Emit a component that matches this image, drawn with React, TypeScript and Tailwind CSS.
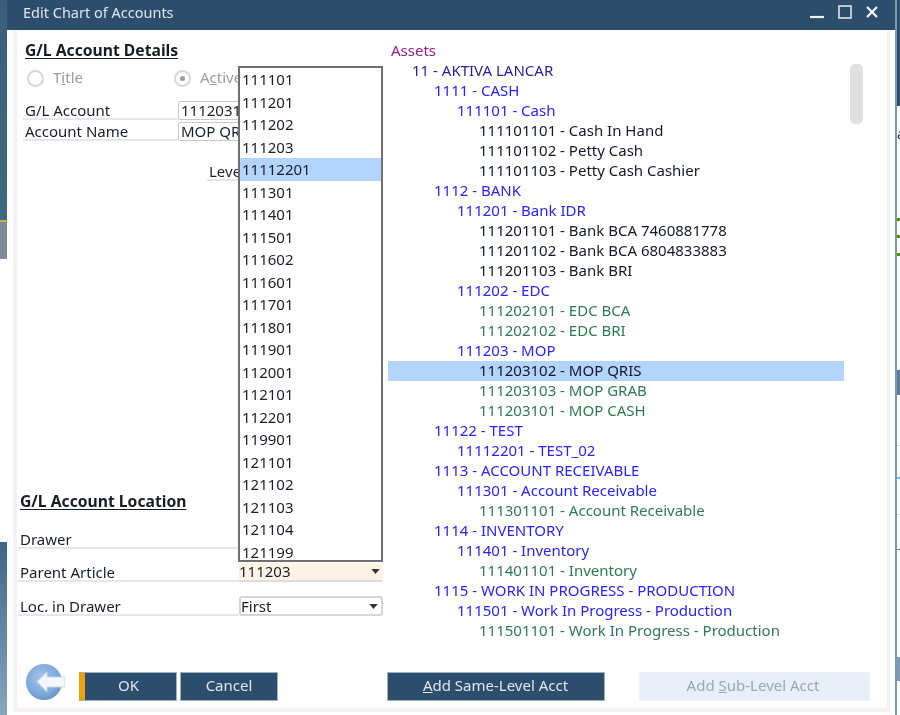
import React from "react";

type Row = [number, string, string];
const B = "text-[#2a22ff]";
const K = "text-[#17172b]";
const G = "text-[#2f7a55]";
const rows: Row[] = [
  [0, "Assets", "text-[#96208f]"],
  [1, "11 - AKTIVA LANCAR", "text-[#2a1d9c]"],
  [2, "1111 - CASH", B],
  [3, "111101 - Cash", B],
  [4, "111101101 - Cash In Hand", K],
  [4, "111101102 - Petty Cash", K],
  [4, "111101103 - Petty Cash Cashier", K],
  [2, "1112 - BANK", B],
  [3, "111201 - Bank IDR", B],
  [4, "111201101 - Bank BCA 7460881778", K],
  [4, "111201102 - Bank BCA 6804833883", K],
  [4, "111201103 - Bank BRI", K],
  [3, "111202 - EDC", B],
  [4, "111202101 - EDC BCA", G],
  [4, "111202102 - EDC BRI", G],
  [3, "111203 - MOP", B],
  [4, "111203102 - MOP QRIS", K],
  [4, "111203103 - MOP GRAB", G],
  [4, "111203101 - MOP CASH", G],
  [2, "11122 - TEST", B],
  [3, "11112201 - TEST_02", B],
  [2, "1113 - ACCOUNT RECEIVABLE", B],
  [3, "111301 - Account Receivable", B],
  [4, "111301101 - Account Receivable", G],
  [2, "1114 - INVENTORY", B],
  [3, "111401 - Inventory", B],
  [4, "111401101 - Inventory", G],
  [2, "1115 - WORK IN PROGRESS - PRODUCTION", B],
  [3, "111501 - Work In Progress - Production", B],
  [4, "111501101 - Work In Progress - Production", G],
];
const indent = ["pl-[3px]", "pl-[24px]", "pl-[46px]", "pl-[69px]", "pl-[91px]"];

const codes = ["111101","111201","111202","111203","11112201","111301","111401","111501","111602","111601","111701","111801","111901","112001","112101","112201","119901","121101","121102","121103","121104","121199"];

function Caret() {
  return (
    <svg width="9" height="5" viewBox="0 0 10 6" className="shrink-0">
      <path d="M0 0h10L5 6z" fill="#333333" />
    </svg>
  );
}

function Radio({ on }: { on?: boolean }) {
  return (
    <span className="w-[17px] h-[17px] rounded-full border-2 border-[#d6d6d6] bg-white flex items-center justify-center shrink-0">
      {on && <span className="w-[5px] h-[5px] rounded-full bg-[#9a9a9a]" />}
    </span>
  );
}

function BackIcon() {
  return (
    <svg width="42" height="38" viewBox="0 0 42 38">
      <defs>
        <radialGradient id="bk" cx="45%" cy="40%" r="65%">
          <stop offset="0" stopColor="#a9c8ea" />
          <stop offset="0.7" stopColor="#7ba8da" />
          <stop offset="1" stopColor="#5f90c8" />
        </radialGradient>
      </defs>
      <circle cx="19" cy="19" r="18" fill="url(#bk)" />
      <path d="M12 18.5 L22 9 V14 H40 V24 H22 V29 Z" fill="#f4f7fb" stroke="#c9d8e8" strokeWidth="0.8" />
    </svg>
  );
}

function Btn({ children, className }: { children: React.ReactNode; className: string }) {
  return (
    <button className={`h-[29px] pb-[2px] flex items-center justify-center text-[15px] border border-[#9fb2c4] ${className}`}>
      {children}
    </button>
  );
}

export default function App() {
  return (
    <div className="w-[900px] h-[715px] flex overflow-hidden bg-white text-[15px] text-[#1d1d2b] font-['Noto_Sans','Liberation_Sans',sans-serif] blur-[0.35px]">
      {/* desktop behind, left edge */}
      <div className="w-[7px] shrink-0 flex flex-col">
        <div className="h-[220px] bg-gradient-to-b from-[#3a5f7b] to-[#3f6a80]" />
        <div className="h-[2px] bg-[#d9a94a]" />
        <div className="h-[37px] bg-[#7d8a99]" />
        <div className="h-[283px] bg-white" />
        <div className="flex-1 bg-gradient-to-b from-[#3f6688] to-[#86a6c0]" />
      </div>

      {/* dialog */}
      <div className="w-[888px] shrink-0 flex flex-col bg-white">
        <div className="h-[30px] shrink-0 bg-[#2c4e6c] flex items-center justify-between pl-[16px] pr-[17px] pb-[6px] text-[#dfe6ee] text-[14.5px]">
          <span className="mt-[2px]">Edit Chart of Accounts</span>
          <div className="flex items-center gap-[14px]">
            <svg width="14" height="14" viewBox="0 0 14 14"><path d="M0 12h14" stroke="#eef2f6" strokeWidth="2.2" /></svg>
            <svg width="14" height="14" viewBox="0 0 14 14"><rect x="1" y="1" width="12" height="12" fill="none" stroke="#dfe6ee" strokeWidth="1.6" /></svg>
            <svg width="12" height="12" viewBox="0 0 12 12"><path d="M1 1l10 10M11 1L1 11" stroke="#f5f7fa" strokeWidth="2.2" /></svg>
          </div>
        </div>
        <div className="flex-1 min-h-0 flex flex-col pl-[6px] pr-[5px] pb-[3px]">
          <div className="flex-1 min-h-0 flex flex-col border-l-4 border-r-[3px] border-b-4 border-[#f6f1f3]">
            <div className="flex-1 min-h-0 flex relative">
              {/* form column */}
              <div className="w-[371px] shrink-0 flex flex-col">
                <h2 className="h-5 mt-[10px] ml-[8px] font-bold text-[15.7px] leading-5 underline underline-offset-2 text-[#1b1b24]">G/L Account Details</h2>
                <div className="h-5 mt-[8px] ml-[10px] flex items-center text-[#9c9c9c]">
                  <Radio />
                  <span className="ml-[9px] w-[121px] leading-[18px] pb-[2px]">T<u>i</u>tle</span>
                  <Radio on />
                  <span className="ml-[9px] leading-[18px] pb-[2px]">A<u>c</u>tive</span>
                </div>
                <div className="h-[19px] mt-[13px] ml-[6px] flex">
                  <div className="w-[155px] pl-[2px] leading-[19px] border-b-2 border-[#e3e7ec]">G/L Account</div>
                  <div className="w-[205px] pl-[2px] leading-[17px] border border-[#c9c9c9] rounded-[2px] overflow-hidden">111203102</div>
                </div>
                <div className="h-[19px] mt-[2px] ml-[6px] flex">
                  <div className="w-[155px] pl-[2px] leading-[19px] border-b-2 border-[#e3e7ec]">Account Name</div>
                  <div className="w-[205px] pl-[2px] leading-[17px] border border-[#c9c9c9] rounded-[2px] overflow-hidden">MOP QRIS</div>
                </div>
                <div className="h-[19px] mt-[21px] ml-[190px] w-[100px] pl-[2px] leading-[19px] border-b-2 border-[#e3e7ec]">Level</div>

                <h2 className="h-5 mt-[310px] ml-[3px] font-bold text-[15.7px] leading-5 underline underline-offset-2 text-[#1b1b24]">G/L Account Location</h2>
                <div className="h-[19px] mt-[19px] ml-px flex">
                  <div className="w-[220px] pl-[2px] leading-[19px] border-b-2 border-[#e3e7ec]">Drawer</div>
                </div>
                <div className="h-[19px] mt-[14px] ml-px flex">
                  <div className="w-[221px] pl-[2px] leading-[19px] border-b-2 border-[#e3e7ec]">Parent Article</div>
                  <div className="w-[144px] pr-[3px] flex items-center justify-between bg-[#fdf3e4] border-b-2 border-[#dcdcdc] rounded-[2px] leading-[15px]">
                    <span>111203</span>
                    <Caret />
                  </div>
                </div>
                <div className="h-[20px] mt-[14px] ml-px flex">
                  <div className="w-[221px] pl-[2px] leading-[20px] border-b-2 border-[#e3e7ec]">Loc. in Drawer</div>
                  <div className="w-[144px] pr-[3px] flex items-center justify-between border-2 border-[#d6d6d6] rounded-[3px]">
                    <span className="leading-[14px]">First</span>
                    <Caret />
                  </div>
                </div>
              </div>

              {/* tree column */}
              <div className="flex-1 min-w-0 flex pt-[11px]">
                <div className="w-[456px] shrink-0">
                  {rows.map(([lvl, text, color], i) => (
                    <div key={i} className={`h-5 leading-[18px] whitespace-nowrap ${indent[lvl]} ${color} ${text === "111203102 - MOP QRIS" ? "bg-[#b3d4fc]" : ""}`}>
                      {text}
                    </div>
                  ))}
                </div>
                <div className="w-[13px] h-[60px] mt-[23px] ml-[6px] rounded-[5px] bg-[#e0e0e0]" />
              </div>

              {/* open dropdown list */}
              <div className="absolute left-[221px] top-[36px] w-[145px] h-[496px] bg-white border-2 border-[#707070] overflow-hidden">
                {codes.map((c) => (
                  <div key={c} className={`h-[22.5px] leading-[22.5px] pl-[2px] ${c === "11112201" ? "bg-[#b3d4fc]" : ""}`}>{c}</div>
                ))}
              </div>
            </div>

            {/* button bar */}
            <div className="h-[37px] mb-[7px] shrink-0 flex items-end pl-[8px]">
              <BackIcon />
              <Btn className="w-[98px] ml-[12px] pr-[4px] bg-[#2c4e6c] text-[#dfe6ee] border-l-[6px] border-l-[#e8a20c]">OK</Btn>
              <Btn className="w-[98px] ml-[3px] bg-[#2c4e6c] text-[#dfe6ee]">Cancel</Btn>
              <Btn className="w-[218px] ml-[109px] pr-[1px] bg-[#2c4e6c] text-[#dfe6ee]"><span><u>A</u>dd Same-Level Acct</span></Btn>
              <Btn className="w-[231px] ml-[34px] pr-[3px] bg-[#e8eff6] text-[#9aa6b6] border-[#eef3f8]"><span>Add <u>S</u>ub-Level Acct</span></Btn>
            </div>
          </div>
        </div>
      </div>

      {/* desktop behind, right edge */}
      <div className="w-[5px] shrink-0 flex flex-col border-l-2 border-[#7d97ad] text-[14px]">
        <div className="h-[106px] bg-[#2c4e6c] shrink-0" />
        <div className="h-[20px] shrink-0" />
        <div className="h-[16px] leading-[16px] shrink-0 overflow-hidden">a</div>
        <div className="h-[76px] shrink-0" />
        <div className="h-[3px] bg-[#4b9400] shrink-0" />
        <div className="h-[14px] shrink-0" />
        <div className="h-[3px] bg-[#4b9400] shrink-0" />
        <div className="h-[15px] shrink-0" />
        <div className="h-[3px] bg-[#4b9400] shrink-0" />
        <div className="h-[114px] shrink-0" />
        <div className="h-[25px] bg-[#5b7b99] shrink-0" />
        <div className="h-[51px] border-b border-[#dddddd] shrink-0" />
        <div className="h-[33px] border-b-2 border-[#6cc0ee] shrink-0" />
        <div className="h-[36px] border-b border-[#dddddd] shrink-0" />
        <div className="h-[35px] border-b border-[#777777] shrink-0" />
        <div className="h-[107px] shrink-0" />
        <div className="h-[24px] bg-[#7f9ab5] shrink-0" />
      </div>
    </div>
  );
}
